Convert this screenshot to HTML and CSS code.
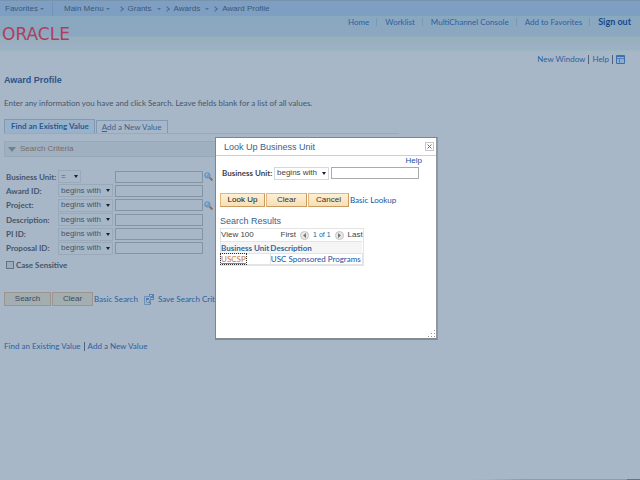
FILE: index.html
```html
<!DOCTYPE html>
<html lang="en">
<head>
<meta charset="utf-8">
<meta name="viewport" content="width=device-width, initial-scale=1">
<title>Award Profile</title>
<link rel="stylesheet" href="styles.css">
</head>
<body>
<header class="header">
  <nav class="crumbs" aria-label="Breadcrumb">
    <a class="crumb favorites" href="#">Favorites<i class="caret"></i></a>
    <a class="crumb main-menu" href="#">Main Menu<i class="caret"></i></a>
    <i class="chevron"></i>
    <a class="crumb" href="#">Grants <i class="caret"></i></a>
    <i class="chevron"></i>
    <a class="crumb" href="#">Awards <i class="caret"></i></a>
    <i class="chevron"></i>
    <a class="crumb" href="#">Award Profile</a>
  </nav>
  <div class="brand-row">
    <div class="logo">ORACLE</div>
    <nav class="global-links" aria-label="Global">
      <a href="#">Home</a>
      <a href="#">Worklist</a>
      <a href="#">MultiChannel Console</a>
      <a href="#">Add to Favorites</a>
      <a class="sign-out" href="#">Sign out</a>
    </nav>
  </div>
</header>
<main class="page">
  <div class="page-links">
    <a href="#">New Window</a><i class="bar"></i><a href="#">Help</a><i class="bar"></i>
    <a class="grid-link" href="#" aria-label="Personalize page">
      <svg width="9" height="9" viewBox="0 0 9 9"><path fill="#8eadd0" stroke="#3d70b0" d="M.5.5h8v8h-8z"/><path fill="#3d70b0" d="M1 1h7v1H1z"/><path stroke="#5581b6" d="M1 3.500h7M3.500 4v4"/></svg>
    </a>
  </div>
  <h1>Award Profile</h1>
  <p class="intro">Enter any information you have and click Search. Leave fields blank for a list of all values.</p>
  <nav class="tabs" aria-label="Search mode">
    <a class="tab active" href="#">Find an Existing Value</a>
    <a class="tab" href="#"><u>A</u>dd a New Value</a>
  </nav>
  <h2 class="criteria-title"><i class="triangle"></i>Search Criteria</h2>
  <form class="criteria">
    <div class="fields">
      <div class="field">
        <label for="unit">Business Unit:</label>
        <span class="picker short"><select aria-label="Business Unit operator"><option>=</option></select></span>
        <input id="unit" type="text">
        <button class="lens" type="button" aria-label="Look up Business Unit"><svg width="9" height="9" viewBox="0 0 9 9"><path stroke="#8a7268" stroke-width="2" d="M5.5 5.5 8.500 8.500"/><circle cx="3.400" cy="3.400" r="2.700" fill="#6ca0d2" stroke="#6f8eb2"/><path stroke="#c2d8eb" d="M2 3.200 3.500 2"/></svg></button>
      </div>
      <div class="field">
        <label for="award">Award ID:</label>
        <span class="picker"><select aria-label="Award ID operator"><option>begins with</option></select></span>
        <input id="award" type="text">
      </div>
      <div class="field">
        <label for="project">Project:</label>
        <span class="picker"><select aria-label="Project operator"><option>begins with</option></select></span>
        <input id="project" type="text">
        <button class="lens" type="button" aria-label="Look up Project"><svg width="9" height="9" viewBox="0 0 9 9"><path stroke="#8a7268" stroke-width="2" d="M5.5 5.5 8.500 8.500"/><circle cx="3.400" cy="3.400" r="2.700" fill="#6ca0d2" stroke="#6f8eb2"/><path stroke="#c2d8eb" d="M2 3.200 3.500 2"/></svg></button>
      </div>
      <div class="field">
        <label for="description">Description:</label>
        <span class="picker"><select aria-label="Description operator"><option>begins with</option></select></span>
        <input id="description" type="text">
      </div>
      <div class="field">
        <label for="pi">PI ID:</label>
        <span class="picker"><select aria-label="PI ID operator"><option>begins with</option></select></span>
        <input id="pi" type="text">
      </div>
      <div class="field">
        <label for="proposal">Proposal ID:</label>
        <span class="picker"><select aria-label="Proposal ID operator"><option>begins with</option></select></span>
        <input id="proposal" type="text">
      </div>
    </div>
    <div class="case"><input id="case" type="checkbox"><label for="case">Case Sensitive</label></div>
    <div class="actions">
      <button class="btn search" type="button">Search</button>
      <button class="btn clear" type="button">Clear</button>
      <a href="#">Basic Search</a>
      <svg class="save-icon" width="10" height="11" viewBox="0 0 10 11"><path fill="#5983b8" d="M5 0h5v6H5z"/><path fill="#a9c2dc" d="M6 1h2v1H6zM7 4h2v1H7z"/><path fill="#9db5cf" stroke="#7190b5" d="M.5 2.500h6v8h-6z"/><path fill="#4778b4" d="M2 4h3v2H2z"/><circle cx="4" cy="7" r="1.500" fill="#c0cfdc" stroke="#6d88a8"/><path stroke="#78685f" d="m5 8 2 2"/></svg>
      <a href="#">Save Search Criteria</a>
    </div>
  </form>
  <nav class="bottom-links" aria-label="Search mode, bottom">
    <a href="#">Find an Existing Value</a><i class="bar"></i><a href="#">Add a New Value</a>
  </nav>
</main>
<footer class="edge"></footer>

<section class="dialog" role="dialog" aria-labelledby="dialog-title">
  <div class="dialog-head">
    <h2 id="dialog-title">Look Up Business Unit</h2>
    <button class="close" type="button" aria-label="Close"><svg width="5" height="5" viewBox="0 0 5 5"><path stroke="#70757c" d="m.5.5 4 4m0-4-4 4"/></svg></button>
  </div>
  <div class="dialog-body">
    <a class="help" href="#">Help</a>
    <div class="lookup-field">
      <label for="lookup">Business Unit:</label>
      <span class="picker"><select aria-label="Lookup operator"><option>begins with</option></select></span>
      <input id="lookup" type="text">
    </div>
    <div class="lookup-actions">
      <button class="btn primary" type="button">Look Up</button>
      <button class="btn" type="button">Clear</button>
      <button class="btn" type="button">Cancel</button>
      <a href="#">Basic Lookup</a>
    </div>
    <h3>Search Results</h3>
    <div class="results">
      <div class="pager">
        <a class="view" href="#">View 100</a>
        <span>First</span>
        <button class="round" type="button" aria-label="Previous"><svg width="9" height="9" viewBox="0 0 9 9"><circle cx="4.500" cy="4.500" r="4" fill="#e9e9e9" stroke="#c4c4c4"/><path fill="#777" d="M6 2v5L3 4.500z"/></svg></button>
        <span class="count">1 of 1</span>
        <button class="round" type="button" aria-label="Next"><svg width="9" height="9" viewBox="0 0 9 9"><circle cx="4.500" cy="4.500" r="4" fill="#e9e9e9" stroke="#c4c4c4"/><path fill="#777" d="M3 2v5l3-2.500z"/></svg></button>
        <span>Last</span>
      </div>
      <table>
        <thead><tr><th>Business Unit</th><th>Description</th></tr></thead>
        <tbody><tr><td><a class="focused" href="#">USCSP</a></td><td><a href="#">USC Sponsored Programs</a></td></tr></tbody>
      </table>
    </div>
  </div>
  <svg class="grip" width="8" height="8" viewBox="0 0 8 8"><path fill="#999" d="M6 0h1v1H6zM3 3h1v1H3zM6 3h1v1H6zM0 6h1v1H0zM3 6h1v1H3zM6 6h1v1H6z"/></svg>
</section>
</body>
</html>
```
FILE: styles.css
```css
* { box-sizing: border-box; }

body {
  margin: 0;
  min-height: 100vh;
  display: flex;
  flex-direction: column;
  background: #a8b7c8;
  color: #45566a;
  font: 8px/10px Lato, "Liberation Sans", sans-serif;
}

a { color: #2d5f9f; text-decoration: none; white-space: nowrap; }
h1, h2, h3, p { margin: 0; }
button, input, select { font: inherit; margin: 0; }
button { padding: 0; border: 0; background: none; }
label { font-weight: bold; white-space: nowrap; }

/* Header */
.header {
  height: 52px;
  background: linear-gradient(#8baac4 0 16px, #8aa8c0 16px, #8ca7c1 36px, #98afbd 37px, #99afbf 43px, #9dafc5 44px 49px, #98b7be 49px 51px, #a8b7c8 51px);
}
.crumbs {
  display: flex;
  align-items: center;
  height: 16px;
  padding-left: 5px;
  border-top: 1px solid #7893ae;
  background: #7e9fc1;
  font-family: "Liberation Sans", Arial, sans-serif;
}
.crumb { display: flex; align-items: center; color: #3c5879; }
.favorites { width: 48px; height: 15px; border-right: 1px solid #6e94b9; }
.main-menu { margin-left: 11px; }
.caret {
  margin-left: 2px;
  border: 2px solid transparent;
  border-top-color: #4d7199;
  border-bottom: 0;
}
.crumb:nth-of-type(n+3) .caret { margin-left: 5px; }
.chevron {
  width: 4px;
  height: 4px;
  margin: 0 5px 0 4px;
  border: solid #4a6d94;
  border-width: 1px 1px 0 0;
  transform: rotate(45deg);
}
.main-menu + .chevron { margin-left: 9px; }
.brand-row { display: flex; justify-content: space-between; }
.logo {
  padding: 9px 0 0 2px;
  color: #ad3f5b;
  font: 17px/18px "DejaVu Sans", sans-serif;
}
.global-links { display: flex; align-items: center; height: 12px; padding-right: 9px; }
.global-links a { padding: 0 7px 0 8px; border-right: 1px solid #7898b7; line-height: 8px; }
.global-links .sign-out { padding: 0 0 0 8px; border: 0; color: #15498c; font-size: 9px; font-weight: bold; }

/* Page */
.page { flex: 1; padding: 0 4px; }
.page-links { display: flex; align-items: center; justify-content: flex-end; height: 14px; padding-right: 11px; }
.grid-link { display: flex; }
.bar { width: 1px; height: 9px; margin: 0 3px; background: #53617b; }
h1 { margin-top: 9px; color: #2b548a; font: bold 9px/11px "Liberation Sans", sans-serif; }
.intro { margin-top: 12px; }
.tabs {
  display: flex;
  align-items: flex-end;
  gap: 1px;
  max-width: 395px;
  margin-top: 11px;
  border-bottom: 1px solid #96abbe;
}
.tab {
  height: 13px;
  padding: 0 5px;
  border: 1px solid #7e9ab5;
  border-bottom: 0;
  color: #3f628b;
  line-height: 13px;
}
.tab.active { height: 14px; padding-left: 6px; background: #9ab2c9; color: #2a5990; font-weight: bold; }
.criteria-title {
  display: flex;
  align-items: center;
  gap: 4px;
  max-width: 395px;
  height: 16px;
  margin-top: 7px;
  padding-left: 3px;
  border: 1px solid #97a8b7;
  background: #9fb0c0;
  color: #7c6b68;
  font: 8px/12px "Liberation Sans", sans-serif;
}
.triangle { border: 4px solid transparent; border-top: 5px solid #6e8294; border-bottom: 0; }
.criteria { padding-top: 13px; }
.fields { display: flex; flex-direction: column; justify-content: space-between; height: 85px; padding-left: 2px; }
.field { display: flex; align-items: center; }
.field label { width: 52px; }

.picker { position: relative; display: flex; width: 55px; margin-right: 2px; }
.picker.short { width: 23px; margin-right: 34px; }
.picker::after {
  content: "";
  position: absolute;
  top: 5px;
  right: 3px;
  border: 2px solid transparent;
  border-top: 3px solid #16222e;
  border-bottom: 0;
  pointer-events: none;
}
select {
  appearance: none;
  width: 100%;
  height: 13px;
  padding: 0 2px;
  border: 1px solid #99a9ba;
  border-radius: 0;
  background: transparent;
  color: #45566a;
  font-family: "Liberation Sans", sans-serif;
}
input[type="text"] {
  width: 88px;
  height: 12px;
  padding: 0 2px;
  border: 1px solid #8494a5;
  border-radius: 0;
  background: transparent;
}
.lens { display: flex; margin-left: 1px; }
.case { display: flex; align-items: center; gap: 2px; margin-top: 5px; padding-left: 2px; }
.case input {
  appearance: none;
  width: 8px;
  height: 8px;
  border: 1px solid #61738a;
  background: #9bacbc;
}

.btn {
  height: 14px;
  border: 1px solid #9c948f;
  background: #a2aeaf;
  color: #3c4b5b;
  font-family: "Liberation Sans", sans-serif;
  line-height: 12px;
}
.actions { display: flex; align-items: center; margin-top: 22px; white-space: nowrap; }
.search { width: 47px; }
.clear { width: 41px; margin: 0 1px; }
.save-icon { margin: 0 4px 0 6px; }
.bottom-links { display: flex; align-items: center; margin-top: 35px; }

.edge { height: 1px; background: linear-gradient(90deg, transparent 70%, #a0b7bd 76%, #8d9ab3 82% 98%, #627382 98%); }

/* Lookup dialog */
.dialog {
  position: absolute;
  left: 215px;
  top: 137px;
  width: 223px;
  min-height: 203px;
  border: 1px solid #7e858c;
  border-right: 2px solid #9097a0;
  border-bottom: 2px solid #838c8c;
  background: #fff;
  color: #444;
}
.dialog a { color: #17519f; }
.dialog-head {
  display: flex;
  align-items: center;
  justify-content: space-between;
  height: 18px;
  padding: 0 2px 0 8px;
  border-bottom: 1px solid #ccd0d4;
}
.dialog h2, .dialog h3 { color: #356290; font: 9px/12px "Liberation Sans", sans-serif; }
.close {
  display: flex;
  align-items: center;
  justify-content: center;
  width: 9px;
  height: 9px;
  border: 1px solid #c3c8cc;
}
.dialog-body { display: flex; flex-direction: column; align-items: flex-start; padding: 0 4px; }
.dialog .help { align-self: flex-end; margin-right: 10px; font-family: "Liberation Sans", sans-serif; }
.lookup-field { display: flex; align-items: center; height: 14px; padding-left: 2px; }
.lookup-field label { width: 52px; }
.dialog select { border-color: #d5d7da; color: #444; }
.dialog input[type="text"] { border-color: #aaa; }
.lookup-actions { display: flex; align-items: center; margin-top: 13px; }
.dialog .btn {
  width: 41px;
  margin-right: 1px;
  border-color: #e3b778;
  border-right-color: #c99b60;
  border-bottom-color: #c99b60;
  background: linear-gradient(#fff0d2, #f5dfb8);
  color: #333;
}
.dialog .btn.primary { width: 45px; color: #111; }
.dialog h3 { margin-top: 8px; }
.results { margin-top: 1px; border: 1px solid #e4e4e4; }
.pager { display: flex; align-items: center; gap: 4px; height: 12px; font-family: "Liberation Sans", sans-serif; }
.pager .view { margin-right: auto; color: #444; }
.pager .count { color: #275d9a; font-size: 7px; }
.round { display: flex; }
table { border-collapse: collapse; }
th, td { padding: 0 1px 0 0; border: 1px solid #e4e4e4; text-align: left; white-space: nowrap; line-height: 10px; }
th { height: 12px; border-width: 1px 0; background: #f5f5f5; color: #376897; }
td { height: 11px; }
table, .results td:first-child { border-left: 0; }
.dialog .focused { color: #c5782b; text-decoration: underline; outline: 1px dotted #333; }
.grip { position: absolute; right: 0; bottom: 0; }
```
